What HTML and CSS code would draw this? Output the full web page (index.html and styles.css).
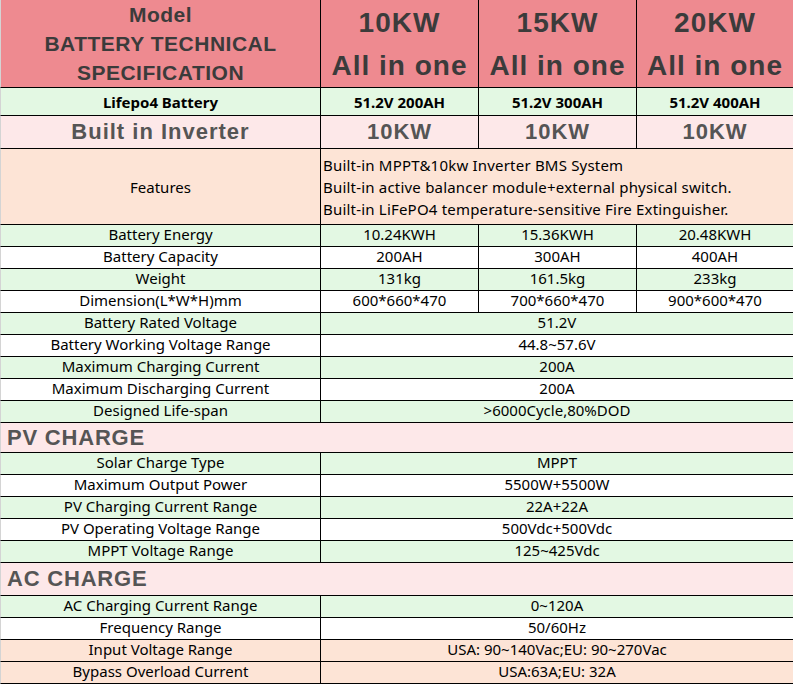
FILE: index.html
```html
<!DOCTYPE html>
<html>
<head>
<meta charset="utf-8">
<link rel="stylesheet" href="styles.css">
</head>
<body>
<table class="spec">
  <colgroup>
    <col class="c1"><col class="c2"><col class="c3"><col class="c4">
  </colgroup>
  <tr class="head">
    <td class="first model">Model<br>BATTERY TECHNICAL<br>SPECIFICATION</td>
    <td class="kw">10KW<br>All in one</td>
    <td class="kw">15KW<br>All in one</td>
    <td class="kw">20KW<br>All in one</td>
  </tr>
  <tr class="green batt">
    <td class="first">Lifepo4 Battery</td>
    <td>51.2V 200AH</td>
    <td>51.2V 300AH</td>
    <td>51.2V 400AH</td>
  </tr>
  <tr class="pink inv">
    <td class="first">Built in Inverter</td>
    <td>10KW</td>
    <td>10KW</td>
    <td>10KW</td>
  </tr>
  <tr class="peach feat">
    <td class="first">Features</td>
    <td colspan="3" class="left">Built-in MPPT&amp;10kw Inverter BMS System<br>Built-in active balancer module+external physical switch.<br>Built-in LiFePO4 temperature-sensitive Fire Extinguisher.</td>
  </tr>
  <tr class="green row"><td class="first">Battery Energy</td><td>10.24KWH</td><td>15.36KWH</td><td>20.48KWH</td></tr>
  <tr class="white row"><td class="first">Battery Capacity</td><td>200AH</td><td>300AH</td><td>400AH</td></tr>
  <tr class="green row"><td class="first">Weight</td><td>131kg</td><td>161.5kg</td><td>233kg</td></tr>
  <tr class="white row"><td class="first">Dimension(L*W*H)mm</td><td>600*660*470</td><td>700*660*470</td><td>900*600*470</td></tr>
  <tr class="green row"><td class="first">Battery Rated Voltage</td><td colspan="3">51.2V</td></tr>
  <tr class="white row"><td class="first">Battery Working Voltage Range</td><td colspan="3">44.8~57.6V</td></tr>
  <tr class="green row"><td class="first">Maximum Charging Current</td><td colspan="3">200A</td></tr>
  <tr class="white row"><td class="first">Maximum Discharging Current</td><td colspan="3">200A</td></tr>
  <tr class="green row"><td class="first">Designed Life-span</td><td colspan="3">&gt;6000Cycle,80%DOD</td></tr>
  <tr class="pink section pv"><td class="first sec" colspan="4">PV CHARGE</td></tr>
  <tr class="green row"><td class="first">Solar Charge Type</td><td colspan="3">MPPT</td></tr>
  <tr class="white row"><td class="first">Maximum Output Power</td><td colspan="3">5500W+5500W</td></tr>
  <tr class="green row"><td class="first">PV Charging Current Range</td><td colspan="3">22A+22A</td></tr>
  <tr class="white row"><td class="first">PV Operating Voltage Range</td><td colspan="3">500Vdc+500Vdc</td></tr>
  <tr class="green row"><td class="first">MPPT Voltage Range</td><td colspan="3">125~425Vdc</td></tr>
  <tr class="pink section ac"><td class="first sec" colspan="4">AC CHARGE</td></tr>
  <tr class="green row"><td class="first">AC Charging Current Range</td><td colspan="3">0~120A</td></tr>
  <tr class="white row"><td class="first">Frequency Range</td><td colspan="3">50/60Hz</td></tr>
  <tr class="peach row"><td class="first">Input Voltage Range</td><td colspan="3">USA: 90~140Vac;EU: 90~270Vac</td></tr>
  <tr class="peach row"><td class="first">Bypass Overload Current</td><td colspan="3">USA:63A;EU: 32A</td></tr>
</table>
</body>
</html>
```
FILE: styles.css
```css
html, body {
  margin: 0;
  padding: 0;
  background: #ffffff;
}

.spec {
  width: 793px;
  table-layout: fixed;
  border-collapse: separate;
  border-spacing: 0;
  font-family: "Noto Sans", "Open Sans", sans-serif;
  font-size: 15px;
  color: #000;
}

.c1 { width: 320px; }
.c2 { width: 158px; }
.c3 { width: 158px; }
.c4 { width: 157px; }

.spec td {
  box-sizing: border-box;
  padding: 0;
  text-align: center;
  vertical-align: middle;
  border-bottom: 1px solid #000;
  border-left: 1px solid #000;
  white-space: nowrap;
  overflow: hidden;
}

.spec td.first {
  border-left: 1px solid #d4d4d4;
}

.green td { background: #e3f8e3; }
.white td { background: #ffffff; }
.pink td { background: #fde8e9; }
.peach td { background: #fde4d6; }

.head td {
  background: #ee8a90;
  height: 88px;
  font-family: "Liberation Sans", Arial, sans-serif;
  font-weight: bold;
  color: #3b3b3b;
}

.model {
  font-size: 21px;
  line-height: 29px;
  letter-spacing: 0.5px;
  padding-top: 1px;
}

.kw {
  font-size: 28px;
  line-height: 43px;
  letter-spacing: 1px;
  padding-bottom: 2px;
}

.batt td {
  height: 28px;
  font-weight: bold;
  font-size: 15px;
}

.inv td {
  height: 33px;
  font-family: "Liberation Sans", Arial, sans-serif;
  font-weight: bold;
  font-size: 22px;
  letter-spacing: 1px;
  color: #555555;
}

.feat td {
  height: 76px;
  line-height: 22px;
}

.feat td.left {
  text-align: left;
  padding-left: 2px;
  letter-spacing: 0.2px;
}

.row td {
  height: 22px;
  line-height: 19px;
  padding-bottom: 2px;
}

.section td {
  text-align: left;
  padding-left: 6px;
  font-family: "Liberation Sans", Arial, sans-serif;
  font-weight: bold;
  font-size: 22px;
  letter-spacing: 0.8px;
  color: #555555;
}

.pv td { height: 30px; }
.ac td { height: 33px; }
```
